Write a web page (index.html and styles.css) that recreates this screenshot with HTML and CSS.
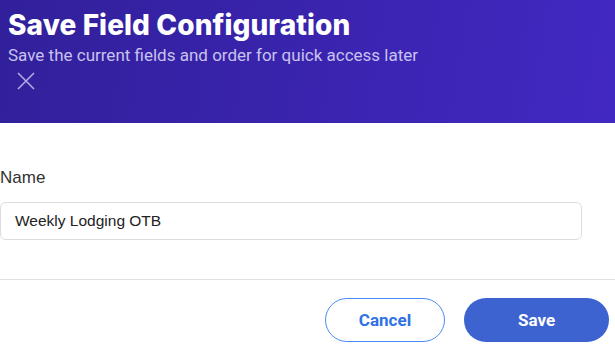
FILE: index.html
```html
<!DOCTYPE html>
<html>
<head>
<meta charset="utf-8">
<link rel="stylesheet" href="styles.css">
</head>
<body>
<div class="dialog">
  <header class="header">
    <h1 class="title">Save Field Configuration</h1>
    <p class="subtitle">Save the current fields and order for quick access later</p>
    <button class="close" aria-label="Close">
      <svg width="18" height="18" viewBox="0 0 18 18"><path d="M1 1L17 17M17 1L1 17" stroke="#b4a9e6" stroke-width="1.6" fill="none"/></svg>
    </button>
  </header>
  <main class="body">
    <label class="label">Name</label>
    <div class="input">Weekly Lodging OTB</div>
  </main>
  <footer class="footer">
    <button class="btn btn-cancel">Cancel</button>
    <button class="btn btn-save">Save</button>
  </footer>
</div>
</body>
</html>
```
FILE: styles.css
```css
html, body { margin: 0; padding: 0; background: #fff; }
body { font-family: "Liberation Sans", Arial, sans-serif; width: 615px; height: 350px; overflow: hidden; }
.dialog { display: flex; flex-direction: column; }
.header {
  height: 123px;
  box-sizing: border-box;
  padding: 6px 8px 0 8px;
  background: linear-gradient(100deg, #31209a 0%, #3a24b0 55%, #4228c2 100%);
  display: flex; flex-direction: column; align-items: flex-start;
}
.title {
  margin: 0;
  font-family: Inter, "Open Sans", sans-serif;
  font-weight: 800;
  font-size: 28px;
  line-height: 38px;
  color: #fff;
  letter-spacing: 0.1px;
}
.subtitle {
  margin: 0;
  font-family: Roboto, "Liberation Sans", sans-serif;
  font-size: 17px;
  line-height: 22px;
  color: #c9c2ee;
}
.close {
  margin: 6px 0 0 9px;
  padding: 0; border: 0; background: none;
  width: 18px; height: 18px; display: flex;
}
.body { padding: 45px 0 0 0; display: flex; flex-direction: column; }
.label { font-size: 17px; line-height: 20px; color: #333; }
.input {
  margin-top: 14px;
  width: 582px; height: 38px; box-sizing: border-box;
  border: 1px solid #dcdcdc; border-radius: 6px;
  padding: 0 14px;
  display: flex; align-items: center;
  font-size: 15.5px; color: #222;
}
.footer {
  margin-top: 39px;
  border-top: 1px solid #e0e0e0;
  padding: 18px 6px 0 0;
  display: flex; justify-content: flex-end; gap: 19px;
}
.btn {
  height: 44px; border-radius: 22px;
  font-family: Roboto, "Liberation Sans", sans-serif; font-weight: 700; font-size: 17px;
  cursor: pointer;
}
.btn-cancel { width: 120px; background: #fff; border: 1px solid #4a8af4; color: #2f72e6; }
.btn-save { width: 145px; background: #3d63d1; border: 0; color: #fff; }
```
